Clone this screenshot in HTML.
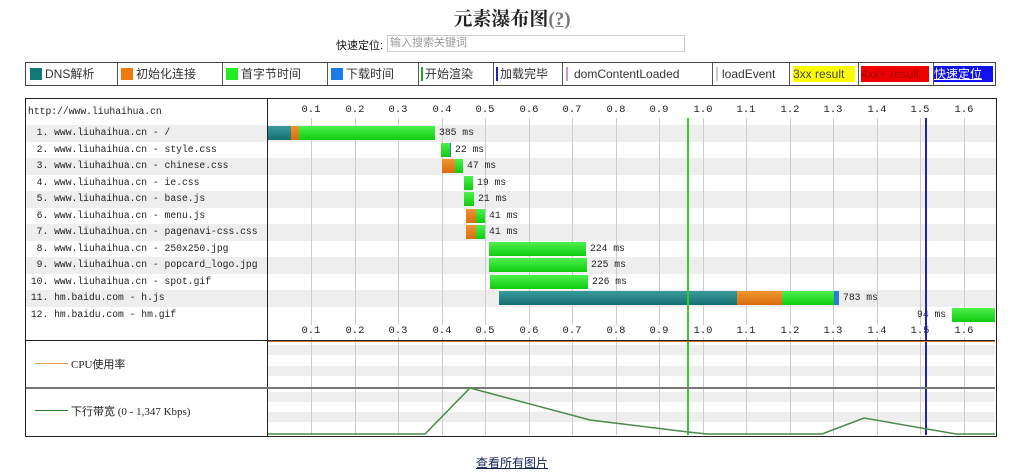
<!DOCTYPE html>
<html><head><meta charset="utf-8"><style>
body{margin:0;width:1024px;height:473px;background:#fff;position:relative;overflow:hidden;font-family:"Liberation Sans","Noto Sans CJK SC",sans-serif;}
.a{position:absolute}
.t{font-family:"Liberation Mono","Noto Sans CJK SC",monospace;font-size:9.7px;color:#222;white-space:pre;line-height:16px}
.row{position:absolute;left:26px;width:970px;height:16.5px}
.g{background:#eee}
.vl{position:absolute;width:1px;background:#ccc}
.bar{position:absolute;height:14px}
.D{background:linear-gradient(#3a9a9a,#157070)}
.O{background:linear-gradient(#f0962e,#d86c10)}
.G{background:linear-gradient(#4df04d,#10cc10)}
.B{background:#2a7ae0}
.leg{position:absolute;top:63px;height:22px;line-height:22px;font-size:12px;color:#333;border-right:1px solid #555}
.sw{display:inline-block;width:12px;height:12px;vertical-align:-2px;margin:0 3px 0 4px}
.tick{position:absolute;font-family:"Liberation Mono",monospace;font-size:10.5px;color:#222;width:30px;text-align:center}
</style></head><body>
<div class="a" style="left:0;width:1024px;top:4px;text-align:center;font-family:'Liberation Serif','Noto Serif CJK SC',serif;font-weight:bold;font-size:19px;color:#222">元素瀑布图<span style="color:#777;text-decoration:underline">(?)</span></div>
<div class="a" style="left:336px;top:37px;font-size:11px;color:#111;white-space:nowrap">快速定位:</div>
<div class="a" style="left:387px;top:35px;width:294px;height:15px;border:1px solid #ccc;font-size:11px;color:#999;line-height:15px;padding-left:2px">输入搜索关键词</div>

<div class="a" style="left:25px;top:62px;width:969px;height:22px;border:1px solid #444"></div>
<div class="leg" style="left:26px;width:91px"><span class="sw" style="background:#157878"></span>DNS解析</div>
<div class="leg" style="left:117px;width:105px"><span class="sw" style="background:#f07a10"></span>初始化连接</div>
<div class="leg" style="left:222px;width:105px"><span class="sw" style="background:#22ee22"></span>首字节时间</div>
<div class="leg" style="left:327px;width:91px"><span class="sw" style="background:#1a7ae8"></span>下载时间</div>
<div class="leg" style="left:418px;width:75px"><span style="border-left:2px solid #2a2;margin:0 2px 0 3px"></span>开始渲染</div>
<div class="leg" style="left:493px;width:69px"><span style="border-left:2px solid #22a;margin:0 2px 0 3px"></span>加载完毕</div>
<div class="leg" style="left:562px;width:150px"><span style="border-left:2px solid #c9c;margin:0 6px 0 4px"></span>domContentLoaded</div>
<div class="leg" style="left:712px;width:77px"><span style="border-left:2px solid #ccc;margin:0 4px 0 4px"></span>loadEvent</div>
<div class="leg" style="left:789px;width:69px"><span style="display:inline-block;margin:0 0 0 4px;background:#ff0;width:62px;height:16px;line-height:16px;color:#444">3xx result</span></div>
<div class="leg" style="left:858px;width:75px"><span style="display:inline-block;margin:0 0 0 3px;background:#e00;width:68px;height:16px;line-height:16px;color:#a00">4xx+ result</span></div>
<div class="leg" style="left:933px;width:62px;border:none"><span style="display:inline-block;margin:0 0 0 1px;background:#11e;width:59px;height:16px;line-height:16px;color:#fff;text-decoration:underline">快速定位</span></div>

<div class="a" style="left:25px;top:98px;width:970px;height:337px;border:1px solid #222"></div>
<div class="row g" style="top:125px"></div>
<div class="row g" style="top:158px"></div>
<div class="row g" style="top:191px"></div>
<div class="row g" style="top:224px"></div>
<div class="row g" style="top:257px"></div>
<div class="row g" style="top:290px"></div>
<div class="a g" style="left:268px;top:345px;width:727px;height:10px"></div>
<div class="a g" style="left:268px;top:366px;width:727px;height:10px"></div>
<div class="a g" style="left:268px;top:392px;width:727px;height:10px"></div>
<div class="a g" style="left:268px;top:412px;width:727px;height:10px"></div>
<div class="a" style="left:267px;top:99px;width:1px;height:337px;background:#222"></div>

<div class="vl" style="left:311px;top:118px;height:317px"></div>
<div class="vl" style="left:355px;top:118px;height:317px"></div>
<div class="vl" style="left:398px;top:118px;height:317px"></div>
<div class="vl" style="left:442px;top:118px;height:317px"></div>
<div class="vl" style="left:485px;top:118px;height:317px"></div>
<div class="vl" style="left:529px;top:118px;height:317px"></div>
<div class="vl" style="left:572px;top:118px;height:317px"></div>
<div class="vl" style="left:616px;top:118px;height:317px"></div>
<div class="vl" style="left:659px;top:118px;height:317px"></div>
<div class="vl" style="left:703px;top:118px;height:317px"></div>
<div class="vl" style="left:746px;top:118px;height:317px"></div>
<div class="vl" style="left:790px;top:118px;height:317px"></div>
<div class="vl" style="left:833px;top:118px;height:317px"></div>
<div class="vl" style="left:877px;top:118px;height:317px"></div>
<div class="vl" style="left:920px;top:118px;height:317px"></div>
<div class="vl" style="left:964px;top:118px;height:317px"></div>

<div class="t a" style="left:28px;top:104px">http://www.liuhaihua.cn</div>
<div class="t a" style="left:25px;top:125px">  1. www.liuhaihua.cn - /</div>
<div class="t a" style="left:25px;top:141.5px">  2. www.liuhaihua.cn - style.css</div>
<div class="t a" style="left:25px;top:158px">  3. www.liuhaihua.cn - chinese.css</div>
<div class="t a" style="left:25px;top:174.5px">  4. www.liuhaihua.cn - ie.css</div>
<div class="t a" style="left:25px;top:191px">  5. www.liuhaihua.cn - base.js</div>
<div class="t a" style="left:25px;top:207.5px">  6. www.liuhaihua.cn - menu.js</div>
<div class="t a" style="left:25px;top:224px">  7. www.liuhaihua.cn - pagenavi-css.css</div>
<div class="t a" style="left:25px;top:240.5px">  8. www.liuhaihua.cn - 250x250.jpg</div>
<div class="t a" style="left:25px;top:257px">  9. www.liuhaihua.cn - popcard_logo.jpg</div>
<div class="t a" style="left:25px;top:273.5px"> 10. www.liuhaihua.cn - spot.gif</div>
<div class="t a" style="left:25px;top:290px"> 11. hm.baidu.com - h.js</div>
<div class="t a" style="left:25px;top:306.5px"> 12. hm.baidu.com - hm.gif</div>

<div style="position:absolute;top:104px;left:0">
<div class="tick" style="left:296px">0.1</div><div class="tick" style="left:340px">0.2</div><div class="tick" style="left:383px">0.3</div><div class="tick" style="left:427px">0.4</div><div class="tick" style="left:470px">0.5</div><div class="tick" style="left:514px">0.6</div><div class="tick" style="left:557px">0.7</div><div class="tick" style="left:601px">0.8</div><div class="tick" style="left:644px">0.9</div><div class="tick" style="left:688px">1.0</div><div class="tick" style="left:731px">1.1</div><div class="tick" style="left:775px">1.2</div><div class="tick" style="left:818px">1.3</div><div class="tick" style="left:862px">1.4</div><div class="tick" style="left:905px">1.5</div><div class="tick" style="left:949px">1.6</div>
</div>
<div style="position:absolute;top:325px;left:0">
<div class="tick" style="left:296px;background:#fff">0.1</div><div class="tick" style="left:340px;background:#fff">0.2</div><div class="tick" style="left:383px;background:#fff">0.3</div><div class="tick" style="left:427px;background:#fff">0.4</div><div class="tick" style="left:470px;background:#fff">0.5</div><div class="tick" style="left:514px;background:#fff">0.6</div><div class="tick" style="left:557px;background:#fff">0.7</div><div class="tick" style="left:601px;background:#fff">0.8</div><div class="tick" style="left:644px;background:#fff">0.9</div><div class="tick" style="left:688px;background:#fff">1.0</div><div class="tick" style="left:731px;background:#fff">1.1</div><div class="tick" style="left:775px;background:#fff">1.2</div><div class="tick" style="left:818px;background:#fff">1.3</div><div class="tick" style="left:862px;background:#fff">1.4</div><div class="tick" style="left:905px;background:#fff">1.5</div><div class="tick" style="left:949px;background:#fff">1.6</div>
</div>

<div class="bar D" style="left:268px;top:126px;width:23px"></div><div class="bar O" style="left:291px;top:126px;width:8px"></div><div class="bar G" style="left:299px;top:126px;width:136px"></div>
<div class="t a" style="left:439px;top:125px">385 ms</div>
<div class="bar G" style="left:441px;top:142.5px;width:9px"></div><div class="bar B" style="left:450px;top:142.5px;width:1px"></div>
<div class="t a" style="left:455px;top:141.5px">22 ms</div>
<div class="bar O" style="left:442px;top:159px;width:13px"></div><div class="bar G" style="left:455px;top:159px;width:8px"></div>
<div class="t a" style="left:467px;top:158px">47 ms</div>
<div class="bar G" style="left:464px;top:175.5px;width:9px"></div>
<div class="t a" style="left:477px;top:174.5px">19 ms</div>
<div class="bar G" style="left:464px;top:192px;width:10px"></div>
<div class="t a" style="left:478px;top:191px">21 ms</div>
<div class="bar O" style="left:466px;top:208.5px;width:10px"></div><div class="bar G" style="left:476px;top:208.5px;width:9px"></div>
<div class="t a" style="left:489px;top:207.5px">41 ms</div>
<div class="bar O" style="left:466px;top:225px;width:10px"></div><div class="bar G" style="left:476px;top:225px;width:9px"></div>
<div class="t a" style="left:489px;top:224px">41 ms</div>
<div class="bar G" style="left:489px;top:241.5px;width:97px"></div>
<div class="t a" style="left:590px;top:240.5px">224 ms</div>
<div class="bar G" style="left:489px;top:258px;width:98px"></div>
<div class="t a" style="left:591px;top:257px">225 ms</div>
<div class="bar G" style="left:490px;top:274.5px;width:98px"></div>
<div class="t a" style="left:592px;top:273.5px">226 ms</div>
<div class="bar D" style="left:499px;top:291px;width:238px"></div><div class="bar O" style="left:737px;top:291px;width:45px"></div><div class="bar G" style="left:782px;top:291px;width:52px"></div><div class="bar B" style="left:834px;top:291px;width:5px"></div>
<div class="t a" style="left:843px;top:290px">783 ms</div>
<div class="bar G" style="left:952px;top:307.5px;width:43px"></div>
<div class="t a" style="left:917px;top:306.5px">94 ms</div>

<div class="a" style="left:687px;top:118px;width:2px;height:317px;background:#3c3"></div>
<div class="a" style="left:925px;top:118px;width:2px;height:317px;background:#22b"></div>

<div class="a" style="left:26px;top:340px;width:969px;height:1px;background:#222"></div>
<div class="a" style="left:268px;top:341px;width:727px;height:1px;background:#d07030"></div>
<div class="a" style="left:26px;top:387px;width:969px;height:2px;background:#777"></div>
<div class="a" style="left:35px;top:363px;width:33px;height:1px;background:#d9a050"></div>
<div class="a" style="left:71px;top:356px;font-family:'Liberation Serif','Noto Sans CJK SC',serif;font-size:11px;color:#222">CPU使用率</div>
<div class="a" style="left:35px;top:410px;width:33px;height:1px;background:#2a7a2a"></div>
<div class="a" style="left:71px;top:403px;font-family:'Liberation Serif','Noto Sans CJK SC',serif;font-size:11px;color:#222;white-space:pre">下行带宽 (0 - 1,347 Kbps)</div>
<svg class="a" style="left:0;top:0" width="1024" height="473"><polyline points="268,434 425,434 470,388 590,420 688,432 707,434 822,434 864,418 956,434 995,434" fill="none" stroke="#4a8a4a" stroke-width="1.5"/></svg>

<div class="a" style="left:0;width:1024px;top:454px;text-align:center;font-size:12px;color:#125;text-decoration:underline">查看所有图片</div>
</body></html>
